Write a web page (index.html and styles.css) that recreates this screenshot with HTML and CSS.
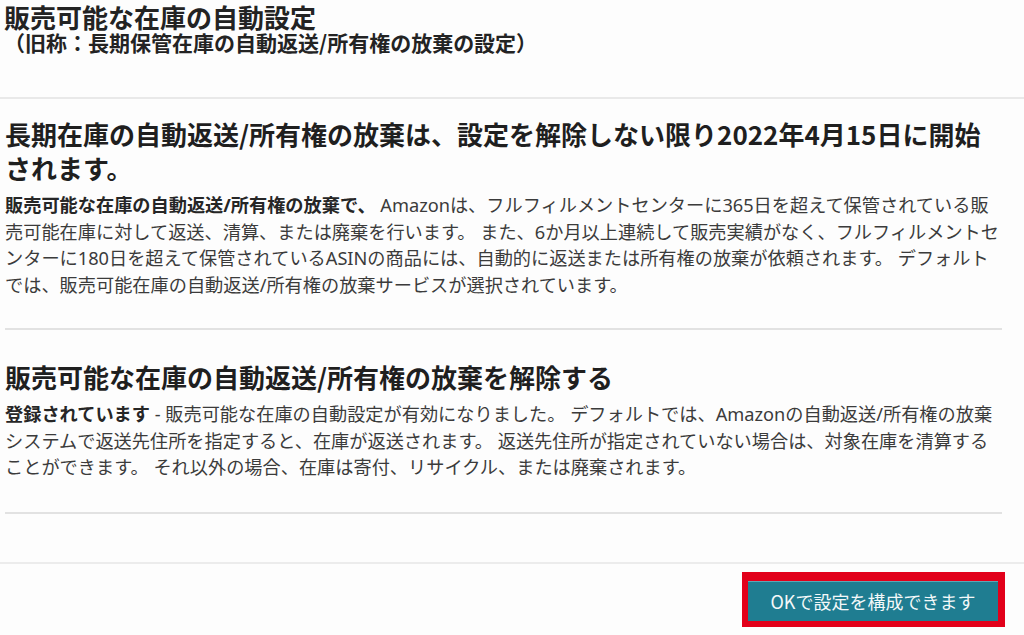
FILE: index.html
```html
<!DOCTYPE html>
<html lang="ja">
<head>
    <meta charset="UTF-8">
    <meta name="viewport" content="width=device-width, initial-scale=1.0">
    <title>販売可能な在庫の自動設定</title>
    <link rel="stylesheet" href="styles.css">
</head>
<body>
    <header class="modal-head">
        <h1 class="modal-title">販売可能な在庫の自動設定</h1>
        <p class="modal-subtitle">（旧称：長期保管在庫の自動返送/所有権の放棄の設定）</p>
    </header>

    <main class="modal-body">
        <section class="block block-first">
            <h2 class="block-title">長期在庫の自動返送/所有権の放棄は、設定を解除しない限り2022年4月15日に開始されます。</h2>
            <p class="block-text"><strong>販売可能な在庫の自動返送/所有権の放棄で、</strong> Amazonは、フルフィルメントセンターに365日を超えて保管されている販売可能在庫に対して返送、清算、または廃棄を行います。 また、6か月以上連続して販売実績がなく、フルフィルメントセンターに180日を超えて保管されているASINの商品には、自動的に返送または所有権の放棄が依頼されます。 デフォルトでは、販売可能在庫の自動返送/所有権の放棄サービスが選択されています。</p>
        </section>
        <section class="block">
            <h2 class="block-title">販売可能な在庫の自動返送/所有権の放棄を解除する</h2>
            <p class="block-text"><strong>登録されています</strong> - 販売可能な在庫の自動設定が有効になりました。 デフォルトでは、Amazonの自動返送/所有権の放棄システムで返送先住所を指定すると、在庫が返送されます。 返送先住所が指定されていない場合は、対象在庫を清算することができます。 それ以外の場合、在庫は寄付、リサイクル、または廃棄されます。</p>
        </section>
    </main>

    <footer class="modal-foot">
        <span class="callout">
            <button class="btn-primary" type="button">OKで設定を構成できます</button>
        </span>
    </footer>
</body>
</html>
```

FILE: styles.css
```css
body {
    margin: 0;
    background: #fdfdfd;
    color: #232323;
    font-family: "Noto Sans CJK JP", "Noto Sans", sans-serif;
}

.modal-head {
    padding: 3px 0 44px 4px;
    border-bottom: 2px solid #e9e9e9;
}

.modal-title {
    margin: 0;
    font-size: 26px;
    line-height: 28px;
    font-weight: 700;
}

.modal-subtitle {
    margin: 0;
    font-size: 21px;
    line-height: 22px;
    font-weight: 700;
}

.modal-body {
    padding: 0 22px 48px 5px;
}

.block {
    padding: 30px 0 31px;
    border-bottom: 2px solid #e2e2e2;
}

.block-first {
    padding-top: 18px;
    padding-bottom: 30px;
}

.block-title {
    margin: 0;
    font-size: 26px;
    line-height: 34px;
    font-weight: 700;
    color: #1f1f1f;
}

/* latin runs (Amazon, ASIN, digits) are a touch wider than the CJK font's own */
.block-text {
    margin: 7px 0 0;
    font-family: "Noto Sans", "Noto Sans CJK JP", sans-serif;
    font-size: 18.2px;
    line-height: 26.5px;
    color: #3b3b3b;
}

.block-text strong {
    color: #262626;
}

.modal-foot {
    display: flex;
    justify-content: flex-end;
    padding: 8px 19px 0 0;
    border-top: 2px solid #ececec;
}

/* red annotation frame round the button */
.callout {
    display: inline-flex;
    padding: 9px 7px 6px 6px;
    background: #e2001a;
}

.btn-primary {
    width: 250px;
    height: 40px;
    padding: 0;
    border: none;
    border-top: 1px solid #5fa6b5;
    background: #1f7d91;
    color: #f3f8f9;
    font-family: "Noto Sans CJK JP", sans-serif;
    font-size: 18px;
    cursor: pointer;
}
```
